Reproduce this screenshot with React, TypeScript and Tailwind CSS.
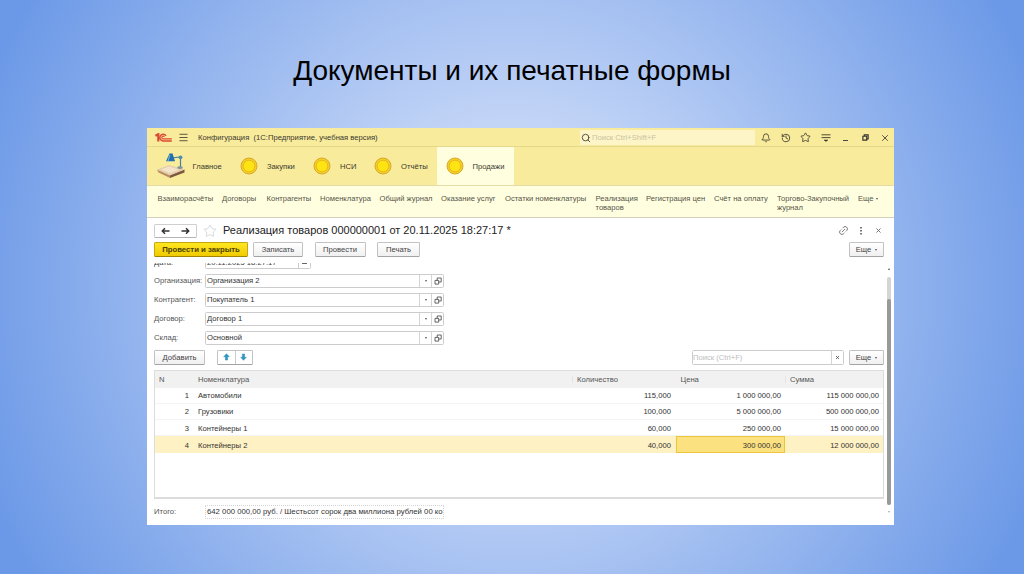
import type { ReactNode } from 'react'
import { Bell, History, Link2, Menu, Search, Star, X } from 'lucide-react'
import clsx from 'clsx'

const sections = [
  { label: 'Закупки', width: 'w-[73px]' },
  { label: 'НСИ', width: 'w-[61px]' },
  { label: 'Отчёты', width: 'w-[64px]' },
]

const commands = [
  { label: 'Взаиморасчёты', width: 'w-[64.5px]' },
  { label: 'Договоры', width: 'w-[44.5px]' },
  { label: 'Контрагенты', width: 'w-[53.5px]' },
  { label: 'Номенклатура', width: 'w-[59.5px]' },
  { label: 'Общий журнал', width: 'w-[61.5px]' },
  { label: 'Оказание услуг', width: 'w-[64px]' },
  { label: 'Остатки номенклатуры', width: 'w-[90.5px]' },
  { label: 'Реализация\nтоваров', width: 'w-[50.5px]' },
  { label: 'Регистрация цен', width: 'w-[68px]' },
  { label: 'Счёт на оплату', width: 'w-[63px]' },
  { label: 'Торгово-Закупочный\nжурнал', width: 'w-[81px]' },
]

const fields = [
  { label: 'Организация:', value: 'Организация 2' },
  { label: 'Контрагент:', value: 'Покупатель 1' },
  { label: 'Договор:', value: 'Договор 1' },
  { label: 'Склад:', value: 'Основной' },
]

const rows = [
  { name: 'Автомобили', qty: '115,000', price: '1 000 000,00', sum: '115 000 000,00' },
  { name: 'Грузовики', qty: '100,000', price: '5 000 000,00', sum: '500 000 000,00' },
  { name: 'Контейнеры 1', qty: '60,000', price: '250 000,00', sum: '15 000 000,00' },
  { name: 'Контейнеры 2', qty: '40,000', price: '300 000,00', sum: '12 000 000,00' },
]

const columns = 'grid grid-cols-[39px_378px_104px_109px_1fr]'

function Caret() {
  return <span className="h-0 w-0 border-x-[1.5px] border-t-2 border-x-transparent border-t-[#555]" />
}

function Button({ className, primary, children }: { className?: string; primary?: boolean; children: ReactNode }) {
  return (
    <button
      type="button"
      className={clsx(
        'flex h-[15px] items-center justify-center rounded-[1.5px] border whitespace-nowrap',
        primary
          ? 'border-[#c3a814] border-b-[#a08500] bg-linear-to-b from-[#ffe61f] to-[#f0cb00] font-bold text-[#4c4200]'
          : 'border-[#c2c2c2] border-b-[#a3a3a3] bg-linear-to-b from-white to-[#f0f0f0] text-[#444]',
        className,
      )}
    >
      {children}
    </button>
  )
}

function Coin() {
  return (
    <svg viewBox="0 0 18 18" className="h-[18px] w-[18px] shrink-0">
      <circle cx="9" cy="9" r="8" fill="#f3cf2c" stroke="#d9a928" strokeWidth="1" />
      <circle cx="9" cy="9" r="5.8" fill="#ffe414" stroke="#e3b21c" strokeWidth="0.8" />
    </svg>
  )
}

function Logo() {
  return (
    <svg viewBox="0 0 17 9" className="h-[9px] w-[17px]" fill="none" stroke="#dc4a35">
      <path d="M0.4 2.8 3.3 1.2V8.4" strokeWidth="2.2" />
      <path d="M11 3A3.3 3.3 0 1 0 8 7.9H16.8" strokeWidth="1.5" />
      <path d="M9.4 3.8A1.4 1.4 0 1 0 8 5.9H16.8" strokeWidth="1.1" />
    </svg>
  )
}

// Desk lamp standing on a wooden board
function LampIcon() {
  return (
    <svg viewBox="0 0 30 26" className="h-[26px] w-[30px]">
      <path d="M1 16.5 14 22v3L2.5 19.5z" fill="#b98f62" />
      <path d="M14 22 28.5 16.5v3L14 25z" fill="#7d5a3e" />
      <path d="M1 16.5 13 12l15.5 4.5L14 22.5z" fill="#e6cfae" />
      <path d="M5 16.5 13 13.6l10 3.1-9 3.6z" fill="#f3e4c8" />
      <path d="M16 5 24.5 4V14" fill="none" stroke="#487f9d" strokeWidth="1.2" />
      <circle cx="24.5" cy="4.3" r="1.9" fill="#4a8fae" />
      <path d="M13.5 .5h3l2.5 7.7H10z" fill="#1f70ad" />
      <path d="M13.8 2 12 8" stroke="#7fbbd8" strokeWidth="1" />
      <ellipse cx="24" cy="14.5" rx="2.8" ry="1.5" fill="#80989b" />
    </svg>
  )
}

function OpenIcon() {
  return (
    <svg viewBox="0 0 8 8" className="h-[8px] w-[8px]" fill="#fff" stroke="#555" strokeWidth="0.9">
      <path d="M3.2 1h4v4h-4z" />
      <path d="M1 3.4h3.7v3.7H1z" />
    </svg>
  )
}

function RowArrow({ down }: { down?: boolean }) {
  return (
    <svg viewBox="0 0 8 9" className={clsx('h-[8px] w-[7px]', down && 'rotate-180')}>
      <path d="M4 .7 7.2 4.2H5.2V8H2.8V4.2H.8z" fill="#2a9bc9" stroke="#237da8" strokeWidth="0.5" />
    </svg>
  )
}

function TitleBar() {
  return (
    <div className="flex h-[19px] items-center border-b border-[#e3d88c] bg-[#f8eb9b] pt-[1px] pl-[8px] text-[#3b392f]">
      <Logo />
      <Menu className="ml-[6px] h-[11px] w-[11px]" strokeWidth={1.8} />
      <span className="ml-[9px] w-[382px] text-[7.65px] whitespace-pre">Конфигурация  (1С:Предприятие, учебная версия)</span>
      <div className="flex h-[15px] w-[175px] items-center bg-[#fdf5c8]">
        <Search className="ml-px h-[10px] w-[10px]" strokeWidth={2} />
        <span className="ml-[1px] text-[7.65px] text-[#c9c3a0]">Поиск Ctrl+Shift+F</span>
      </div>
      <div className="ml-[6px] flex items-center">
        <Bell className="h-[10px] w-[10px]" strokeWidth={2} />
        <History className="ml-[10px] h-[10px] w-[10px]" strokeWidth={2} />
        <Star className="ml-[9px] h-[11px] w-[11px]" strokeWidth={1.8} />
        <svg viewBox="0 0 10 10" className="ml-[10px] h-[10px] w-[10px]" stroke="currentColor">
          <path d="M.5 1.8h9M.5 4.6h9M3 7.2h4" strokeWidth="0.9" />
          <path d="M3.5 7h3L5 9z" fill="currentColor" stroke="none" />
        </svg>
        <span className="mt-[6px] ml-[12px] h-px w-[5px] bg-[#4b493d]" />
        <svg viewBox="0 0 8 8" className="ml-[14px] h-[7px] w-[7px]" fill="none" stroke="#333" strokeWidth="1.3">
          <path d="M1 2.6h4.4V7H1z" />
          <path d="M2.6 2.4V1H7v4.5H5.6" />
        </svg>
        <X className="ml-[11px] h-[10px] w-[10px]" strokeWidth={2} />
      </div>
    </div>
  )
}

function SectionBar() {
  return (
    <div className="flex h-[39px] items-center border-b border-[#e5dba4] bg-[#f8eb9b] pl-[9px] text-[7.65px] text-[#3b392f]">
      <LampIcon />
      <span className="ml-[6.5px] w-[47px] pt-[1px]">Главное</span>
      {sections.map((s) => (
        <div key={s.label} className={clsx('flex shrink-0 items-center', s.width)}>
          <Coin />
          <span className="ml-[9.5px] pt-[1px]">{s.label}</span>
        </div>
      ))}
      <div className="-ml-px flex h-full w-[77px] items-center bg-[#ffffe0] pl-[9px]">
        <Coin />
        <span className="ml-[9px] pt-[1px]">Продажи</span>
      </div>
    </div>
  )
}

function CommandBar() {
  return (
    <div className="flex h-[32px] border-b-[1.5px] border-[#d3d1bb] bg-[#ffffdf] pt-[7.5px] pl-[10.5px] text-[7.6px] leading-[9.5px] text-[#55534a]">
      {commands.map((c) => (
        <span key={c.label} className={clsx('shrink-0 whitespace-pre', c.width)}>
          {c.label}
        </span>
      ))}
      <span className="flex h-[10px] items-center gap-[3px]">
        Еще <Caret />
      </span>
    </div>
  )
}

function DocumentHeader() {
  return (
    <>
      <div className="flex h-[24px] items-center pt-[1px]">
        <div className="flex h-[14px] w-[43px] items-center justify-around rounded-[1.5px] border border-[#cfcfcf] border-b-[#b3b3b3]">
          <svg viewBox="0 0 9 8" className="h-[8px] w-[9px]" fill="none" stroke="#333" strokeWidth="1.5">
            <path d="M8.5 4H1.5M4 1.3 1.3 4 4 6.7" />
          </svg>
          <svg viewBox="0 0 9 8" className="h-[8px] w-[9px]" fill="none" stroke="#333" strokeWidth="1.5">
            <path d="M.5 4h7M5 1.3 7.7 4 5 6.7" />
          </svg>
        </div>
        <Star className="ml-[6px] h-[14px] w-[14px] text-[#c5c9cc]" strokeWidth={1.2} />
        <h2 className="ml-[6px] text-[11px] whitespace-nowrap text-[#222]">
          Реализация товаров 000000001 от 20.11.2025 18:27:17 *
        </h2>
        <div className="ml-auto flex items-center pr-[2px] text-[#666]">
          <Link2 className="h-[11px] w-[11px] -rotate-45" strokeWidth={1.8} />
          <svg viewBox="0 0 2 8" className="ml-[11px] h-[8px] w-[2px]" fill="#555">
            <path d="M.2 0h1.6v1.6H.2zM.2 3h1.6v1.6H.2zM.2 6h1.6v1.6H.2z" />
          </svg>
          <X className="ml-[13px] h-[7px] w-[7px]" strokeWidth={3} />
        </div>
      </div>
      <div className="flex h-[15px]">
        <Button primary className="w-[94px] text-[7.75px]">
          Провести и закрыть
        </Button>
        <Button className="ml-[5px] w-[50px]">Записать</Button>
        <Button className="ml-[11.5px] w-[51px]">Провести</Button>
        <Button className="ml-[11.5px] w-[43px]">Печать</Button>
        <Button className="ml-auto w-[35px] gap-[4px]">
          Еще <Caret />
        </Button>
      </div>
    </>
  )
}

function Fields() {
  return (
    <>
      {/* the date row is scrolled half out of view */}
      <div className="mt-[6px] flex h-[5.5px] items-end overflow-hidden text-[#444]">
        <span className="w-[51px] leading-[13px]">Дата:</span>
        <div className="flex h-[14px] w-[106px] items-center justify-between rounded-[1.5px] border border-[#cccccc] pr-[3px] pl-[1px] leading-[8px]">
          <span className="pt-[2px]">20.11.2025 18:27:17</span>
          <span className="flex h-full items-center border-l border-[#cccccc] pl-[3px]">
            <i className="h-[5px] w-[5px] border border-[#666]" />
          </span>
        </div>
      </div>
      <div className="mt-[5px] flex flex-col gap-[5px]">
        {fields.map((f) => (
          <div key={f.label} className="flex h-[14px] items-center">
            <span className="w-[51px] text-[#555]">{f.label}</span>
            <div className="flex h-full w-[239px] items-center rounded-[1.5px] border border-[#cccccc] text-[#333]">
              <span className="flex-1 pl-[1px]">{f.value}</span>
              <span className="flex h-full w-[12px] items-center justify-center border-l border-[#d4d4d4]">
                <Caret />
              </span>
              <span className="flex h-full w-[12px] items-center justify-center border-l border-[#d4d4d4]">
                <OpenIcon />
              </span>
            </div>
          </div>
        ))}
      </div>
    </>
  )
}

function ItemsTable() {
  return (
    <div className="mt-[5px] h-[129.5px] border border-t-[1.5px] border-b-2 border-[#dcdcdc] text-[#333]">
      <div className={clsx(columns, 'h-[17px] items-center bg-[#f1f1f1] pt-[1px] text-[#555]')}>
        <span className="pl-[4px]">N</span>
        <span className="pl-[4px]">Номенклатура</span>
        <span className="border-l border-[#e4e4e4] pl-[4px]">Количество</span>
        <span className="pl-[4.5px]">Цена</span>
        <span className="border-l border-[#e4e4e4] pl-[4px]">Сумма</span>
      </div>
      {rows.map((r, i) => {
        const active = i === rows.length - 1
        return (
          <div
            key={r.name}
            className={clsx(
              columns,
              'h-[16.3px] items-center text-right leading-[8px]',
              active ? 'bg-[#fef1c4]' : 'border-b border-[#f3f3f3]',
            )}
          >
            <span className="pt-[2px] pr-[5px]">{i + 1}</span>
            <span className="pt-[2px] pl-[4px] text-left">{r.name}</span>
            <span className="pt-[2px] pr-[5px]">{r.qty}</span>
            <span
              className={clsx(
                'flex h-full items-center justify-end pt-[2px]',
                active ? 'border border-[#ecc63a] bg-[#fce181] pr-[3px]' : 'pr-[4px]',
              )}
            >
              {r.price}
            </span>
            <span className="pt-[2px] pr-[4px]">{r.sum}</span>
          </div>
        )
      })}
    </div>
  )
}

export default function App() {
  return (
    <div className="flex h-[574px] w-[1024px] flex-col bg-[radial-gradient(circle_560px_at_center,#e6edfd_0%,#6c99e7_100%)] font-['Liberation_Sans',Arial,sans-serif]">
      <h1 className="mt-[54px] text-center text-[28px] leading-[34px] text-black">Документы и их печатные формы</h1>
      <div className="mt-[40px] ml-[147px] h-[397px] w-[747px] bg-white leading-none">
        <TitleBar />
        <SectionBar />
        <CommandBar />
        <div className="flex text-[7.65px]">
          <div className="w-[737px] pl-[7px]">
            <DocumentHeader />
            <Fields />
            <div className="mt-[5px] flex h-[15px]">
              <Button className="w-[51px] pt-[1px]">Добавить</Button>
              <div className="ml-[12px] flex h-full w-[36px] items-center rounded-[1.5px] border border-[#c2c2c2] border-b-[#a3a3a3]">
                <span className="flex h-full flex-1 items-center justify-center border-r border-[#ccc]">
                  <RowArrow />
                </span>
                <span className="flex flex-1 items-center justify-center">
                  <RowArrow down />
                </span>
              </div>
              <div className="ml-auto flex h-[15px] w-[152px] items-center rounded-[1.5px] border border-[#cccccc]">
                <span className="flex-1 pt-[1px] text-[#bdbdbd]">Поиск (Ctrl+F)</span>
                <span className="flex h-full w-[12px] items-center justify-center border-l border-[#d4d4d4]">
                  <X className="h-[5px] w-[5px] text-[#555]" strokeWidth={4} />
                </span>
              </div>
              <Button className="ml-[5px] w-[35px] gap-[4px] pt-[1px]">
                Еще <Caret />
              </Button>
            </div>
            <ItemsTable />
            <div className="mt-[5.5px] flex h-[14px] items-center">
              <span className="w-[51px] text-[#555]">Итого:</span>
              <span className="flex h-full w-[239px] items-center border border-dotted border-[#d4d4d4] pl-[1px] text-[7.75px] whitespace-nowrap text-[#333]">
                642 000 000,00 руб. / Шестьсот сорок два миллиона рублей 00 ко
              </span>
            </div>
          </div>
          <div className="flex w-[10px] flex-col items-center pt-[50px]">
            <span className="h-0 w-0 border-x-[1.5px] border-b-2 border-x-transparent border-b-[#555]" />
            <span className="mt-[7px] h-[228px] w-[4px] rounded-full bg-[#d5d5d5] pt-[22px]">
              <span className="block h-full rounded-full bg-[#999]" />
            </span>
            <span className="mt-[6px] h-0 w-0 border-x-[1.5px] border-t-2 border-x-transparent border-t-[#aaa]" />
          </div>
        </div>
      </div>
    </div>
  )
}
